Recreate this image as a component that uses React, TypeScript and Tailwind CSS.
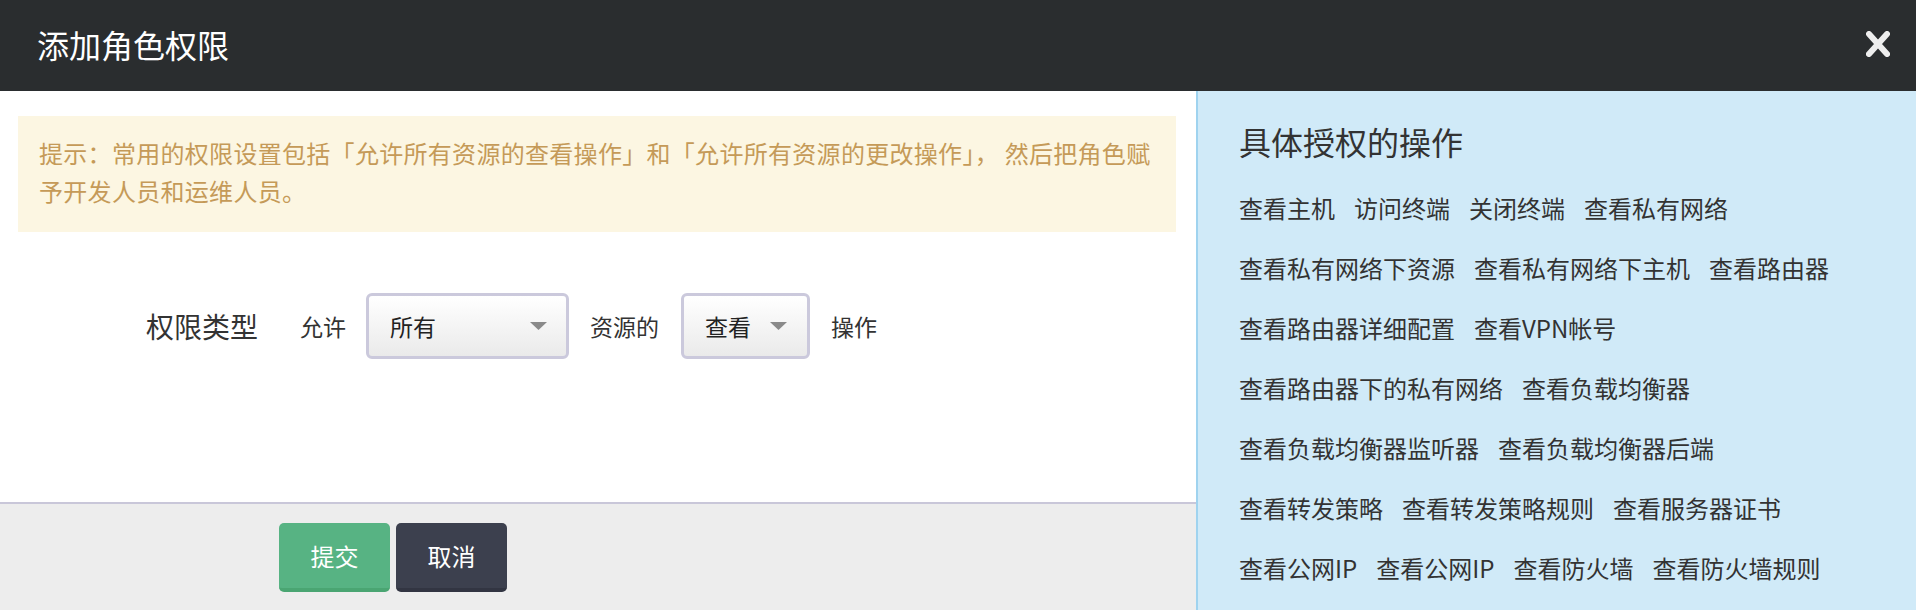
import React from "react";

const ops = [
  "查看主机",
  "访问终端",
  "关闭终端",
  "查看私有网络",
  "查看私有网络下资源",
  "查看私有网络下主机",
  "查看路由器",
  "查看路由器详细配置",
  "查看VPN帐号",
  "查看路由器下的私有网络",
  "查看负载均衡器",
  "查看负载均衡器监听器",
  "查看负载均衡器后端",
  "查看转发策略",
  "查看转发策略规则",
  "查看服务器证书",
  "查看公网IP",
  "查看公网IP",
  "查看防火墙",
  "查看防火墙规则",
];

function Caret() {
  return (
    <svg width="17" height="8" viewBox="0 0 17 8" className="shrink-0">
      <path d="M0 0 L17 0 L8.5 8 Z" fill="#8a8a8a" />
    </svg>
  );
}

export default function App() {
  return (
    <div
      className="flex h-[610px] w-[1916px] flex-col overflow-hidden bg-white"
      style={{ fontFamily: '"Noto Sans CJK SC", "Noto Sans", sans-serif' }}
    >
      {/* header */}
      <div className="flex h-[91px] shrink-0 items-center justify-between bg-[#2a2d2f] pb-[3px] pl-[37px] pr-[26px]">
        <h1 className="text-[32px] leading-none text-white">添加角色权限</h1>
        <svg width="24" height="26" viewBox="0 0 24 26">
          <path
            d="M3 3 L21 23 M21 3 L3 23"
            stroke="#eeeeee"
            strokeWidth="6"
            strokeLinecap="round"
          />
        </svg>
      </div>

      <div className="flex flex-1">
        {/* left */}
        <div className="flex w-[1196px] shrink-0 flex-col">
          <div className="flex-1 pl-[18px] pr-[20px] pt-[25px]">
            <div className="bg-[#fcf6e2] pb-[22px] pl-[21px] pr-[12px] pt-[18px] text-[24px] leading-[38px] tracking-[0.3px] text-[#c59a58]">
              提示：常用的权限设置包括「允许所有资源的查看操作」和「允许所有资源的更改操作」， 然后把角色赋予开发人员和运维人员。
            </div>

            <div className="mt-[61px] flex items-center pl-[128px] text-[#333]">
              <span className="mr-[42px] text-[28px]">权限类型</span>
              <span className="mr-[20px] text-[23px]">允许</span>
              <div className="mr-[21px] flex h-[66px] w-[203px] items-center justify-between rounded-[6px] border-[3px] border-[#cbc9dc] bg-linear-to-b from-white to-[#eaeaea] pl-[21px] pr-[19px]">
                <span className="text-[23px] text-[#222]">所有</span>
                <Caret />
              </div>
              <span className="mr-[22px] text-[23px]">资源的</span>
              <div className="mr-[21px] flex h-[66px] items-center rounded-[6px] border-[3px] border-[#cbc9dc] bg-linear-to-b from-white to-[#eaeaea] pl-[21px] pr-[20px]">
                <span className="mr-[19px] text-[23px] text-[#222]">查看</span>
                <Caret />
              </div>
              <span className="text-[23px]">操作</span>
            </div>
          </div>

          <div className="flex h-[108px] shrink-0 items-start gap-[6px] border-t-2 border-[#c9c7d9] bg-[#ededed] pl-[279px] pt-[19px]">
            <button className="flex h-[69px] w-[111px] items-center justify-center rounded-[5px] border-b-4 border-[#4aa572] bg-[#57b383] text-[24px] text-white">
              提交
            </button>
            <button className="flex h-[69px] w-[111px] items-center justify-center rounded-[5px] border-b-4 border-[#323542] bg-[#3c404e] text-[24px] text-white">
              取消
            </button>
          </div>
        </div>

        {/* right */}
        <div className="flex-1 border-l-2 border-[#9fd3ef] bg-[#d0eaf8] pl-[41px] pr-[66px] pt-[30px] text-[#333]">
          <h2 className="mb-[17px] text-[32px] leading-[40px]">具体授权的操作</h2>
          <div className="flex flex-wrap gap-x-[19px] text-[24px] leading-[60px]">
            {ops.map((op, i) => (
              <span key={i}>{op}</span>
            ))}
          </div>
        </div>
      </div>
    </div>
  );
}
